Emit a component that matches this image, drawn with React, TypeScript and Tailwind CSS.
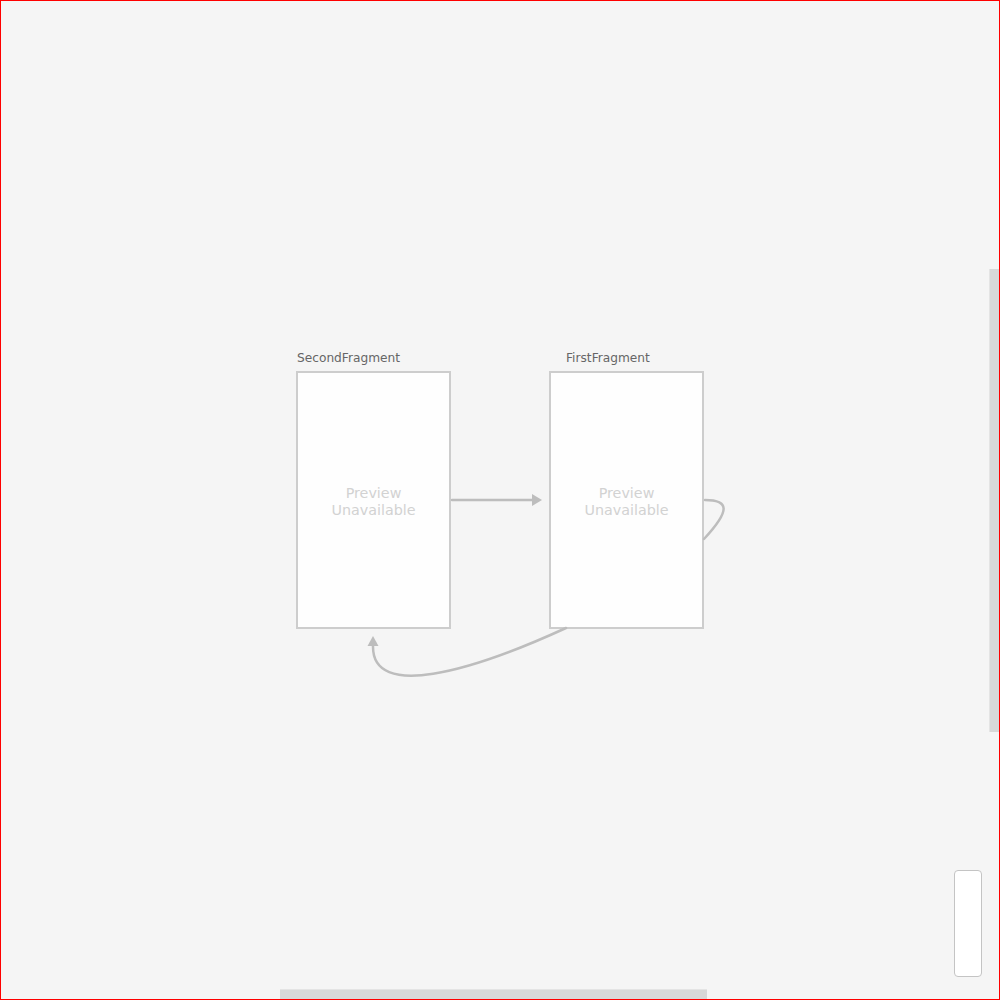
export default function App() {
  const nodes = [
    { id: "second", label: "SecondFragment", x: 297, labelPad: 0 },
    { id: "first", label: "FirstFragment", x: 550, labelPad: 16 },
  ];

  return (
    <div className="relative h-[1000px] w-[1000px] overflow-hidden bg-[#f5f5f5] font-['DejaVu_Sans',sans-serif]">
      {/* navigation graph nodes */}
      {nodes.map((n) => (
        <div key={n.id} className="absolute top-[351px] flex w-[155px] flex-col gap-[6px]" style={{ left: n.x - 1 }}>
          <div className="whitespace-nowrap pl-px text-[12.2px] leading-[14px] text-[#666666]" style={{ paddingLeft: n.labelPad + 1 }}>
            {n.label}
          </div>
          <div className="flex h-[258px] items-center justify-center border-2 border-[#cdcdcd] bg-[#fefefe]">
            <p className="pt-[3px] text-center text-[14.3px] leading-[17px] text-[#d2d2d2]">
              Preview
              <br />
              Unavailable
            </p>
          </div>
        </div>
      ))}

      <svg className="pointer-events-none absolute inset-0" width="1000" height="1000" viewBox="0 0 1000 1000">
        <g fill="none" stroke="#bdbdbd" strokeWidth="2.5" strokeLinecap="round">
          <path d="M452 500 L533 500" />
          <path d="M705 500 C729 500 731 510 704 539" />
          <path d="M566 628 C470 672 372 700 373 646" />
        </g>
        <g fill="#bdbdbd">
          <path d="M532 494 L542 500 L532 506 Z" />
          <path d="M367.5 646 L373 636 L378.5 646 Z" />
        </g>
      </svg>

      {/* scrollbars */}
      <div className="absolute left-[989px] top-[269px] h-[463px] w-[10px] border-l border-[#e4e4e4] bg-[#d8d8d8]" />
      <div className="absolute left-[280px] top-[989px] h-[10px] w-[427px] border-t border-[#e4e4e4] bg-[#d8d8d8]" />

      {/* zoom control */}
      <div className="absolute left-[954px] top-[870px] h-[107px] w-[28px] rounded-[4px] border border-[#c4c4c4] bg-white" />

      <div className="pointer-events-none absolute inset-0 border border-[#ff0000]" />
    </div>
  );
}
